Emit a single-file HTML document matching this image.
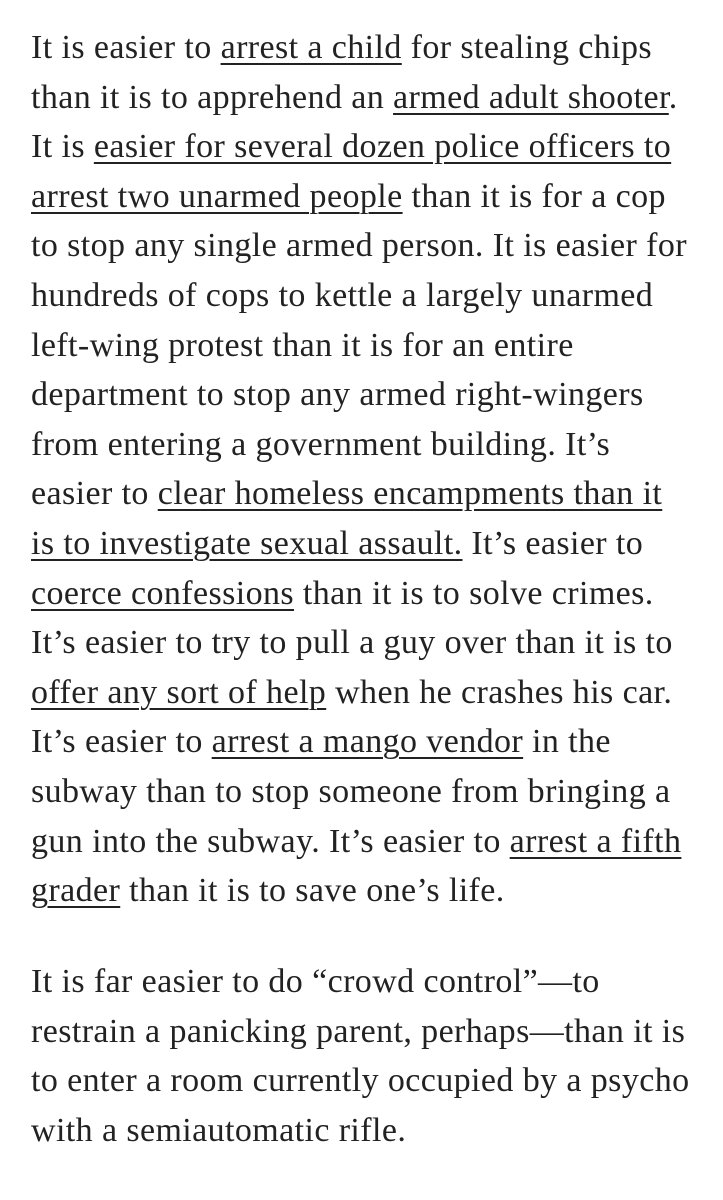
<!DOCTYPE html>
<html><head><meta charset="utf-8"><style>
html,body{margin:0;padding:0;background:#fff;width:723px;height:1200px;overflow:hidden}
.t{position:absolute;left:31px;top:0;font-family:"Liberation Serif",serif;font-size:34px;letter-spacing:0.4px;color:#222;line-height:49.6px}
.l{display:block;white-space:nowrap;height:49.6px}
u{text-decoration:underline;text-decoration-thickness:2px;text-underline-offset:5px}
</style></head><body>
<div class="t" style="top:23px">
<span class="l">It is easier to <u>arrest a child</u> for stealing chips</span>
<span class="l">than it is to apprehend an <u>armed adult shooter</u>.</span>
<span class="l">It is <u>easier for several dozen police officers to</u></span>
<span class="l"><u>arrest two unarmed people</u> than it is for a cop</span>
<span class="l">to stop any single armed person. It is easier for</span>
<span class="l">hundreds of cops to kettle a largely unarmed</span>
<span class="l">left-wing protest than it is for an entire</span>
<span class="l">department to stop any armed right-wingers</span>
<span class="l">from entering a government building. It’s</span>
<span class="l">easier to <u>clear homeless encampments than it</u></span>
<span class="l"><u>is to investigate sexual assault.</u> It’s easier to</span>
<span class="l"><u>coerce confessions</u> than it is to solve crimes.</span>
<span class="l">It’s easier to try to pull a guy over than it is to</span>
<span class="l"><u>offer any sort of help</u> when he crashes his car.</span>
<span class="l">It’s easier to <u>arrest a mango vendor</u> in the</span>
<span class="l">subway than to stop someone from bringing a</span>
<span class="l">gun into the subway. It’s easier to <u>arrest a fifth</u></span>
<span class="l"><u>grader</u> than it is to save one’s life.</span>
</div>
<div class="t" style="top:957px">
<span class="l">It is far easier to do “crowd control”—to</span>
<span class="l">restrain a panicking parent, perhaps—than it is</span>
<span class="l">to enter a room currently occupied by a psycho</span>
<span class="l">with a semiautomatic rifle.</span>
</div>
</body></html>
